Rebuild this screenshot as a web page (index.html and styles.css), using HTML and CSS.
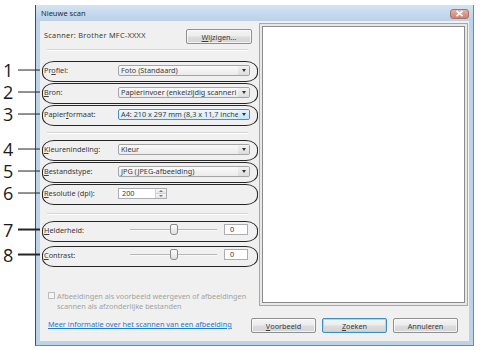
FILE: index.html
```html
<!DOCTYPE html>
<html lang="nl">
<head>
    <meta charset="UTF-8">
    <title>Nieuwe scan</title>
    <link rel="stylesheet" href="styles.css">
</head>
<body>
    <div class="page">
        <div class="window">
            <div class="titlebar">
                <span class="title">Nieuwe scan</span>
                <span class="close">
                    <svg width="9" height="7" viewBox="0 0 9 7"><path d="M1.5 0.8 L7.5 6.2 M7.5 0.8 L1.5 6.2" stroke="#fff" stroke-width="1.6"/></svg>
                </span>
            </div>
            <div class="client">
                <div class="main">
                    <div class="settings">
                        <div class="scanner-row">
                            <span class="scanner-name">Scanner: Brother MFC-XXXX</span>
                            <span class="btn btn-change"><u>W</u>ijzigen...</span>
                        </div>
                        <div class="sep sep-1"></div>

                        <div class="group group-a">
                            <div class="row">
                                <span class="callout">1</span>
                                <span class="label">Pr<u>o</u>fiel:</span>
                                <span class="combo"><span class="combo-text">Foto (Standaard)</span><span class="arrow"></span></span>
                            </div>
                            <div class="row">
                                <span class="callout">2</span>
                                <span class="label"><u>B</u>ron:</span>
                                <span class="combo"><span class="combo-text">Papierinvoer (enkelzijdig scanneri</span><span class="arrow"></span></span>
                            </div>
                            <div class="row">
                                <span class="callout">3</span>
                                <span class="label">Papier<u>f</u>ormaat:</span>
                                <span class="combo combo-focus"><span class="combo-text">A4: 210 x 297 mm (8,3 x 11,7 inche</span><span class="arrow"></span></span>
                            </div>
                        </div>
                        <div class="sep sep-2"></div>

                        <div class="group group-b">
                            <div class="row">
                                <span class="callout">4</span>
                                <span class="label"><u>K</u>leurenindeling:</span>
                                <span class="combo"><span class="combo-text">Kleur</span><span class="arrow"></span></span>
                            </div>
                            <div class="row">
                                <span class="callout">5</span>
                                <span class="label"><u>B</u>estandstype:</span>
                                <span class="combo"><span class="combo-text">JPG (JPEG-afbeelding)</span><span class="arrow"></span></span>
                            </div>
                            <div class="row">
                                <span class="callout">6</span>
                                <span class="label"><u>R</u>esolutie (dpi):</span>
                                <span class="spin">
                                    <span class="spin-value">200</span>
                                    <span class="spin-btns"><span class="up"></span><span class="down"></span></span>
                                </span>
                            </div>
                        </div>
                        <div class="sep sep-3"></div>

                        <div class="group group-c">
                            <div class="row row-slider">
                                <span class="callout">7</span>
                                <span class="label"><u>H</u>elderheid:</span>
                                <span class="slider"><span class="track"></span><span class="thumb"></span></span>
                                <span class="value">0</span>
                            </div>
                            <div class="row row-slider">
                                <span class="callout">8</span>
                                <span class="label"><u>C</u>ontrast:</span>
                                <span class="slider"><span class="track"></span><span class="thumb"></span></span>
                                <span class="value">0</span>
                            </div>
                        </div>

                        <div class="check">
                            <span class="checkbox"></span>
                            <span>Afbeeldingen als voorbeeld weergeven of afbeeldingen<br>scannen als afzonderlijke bestanden</span>
                        </div>
                    </div>
                    <div class="preview"><div class="preview-inner"></div></div>
                </div>
                <div class="footer">
                    <a class="link" href="#">Meer informatie over het scannen van een afbeelding</a>
                    <div class="buttons">
                        <span class="btn"><u>V</u>oorbeeld</span>
                        <span class="btn btn-default"><u>Z</u>oeken</span>
                        <span class="btn">Annuleren</span>
                    </div>
                </div>
            </div>
        </div>
    </div>
</body>
</html>
```
FILE: styles.css
```css
*{
    margin: 0;
    padding: 0;
    box-sizing: border-box;
}
body {
    width: 500px;
    height: 350px;
    background-color: white;
    font-family: 'Noto Sans', 'Open Sans', sans-serif;
    font-size: 7.3px;
    color: #3a3a3a;
    overflow: hidden;
}
u {
    text-decoration: underline;
    text-underline-offset: 1px;
}
.page {
    padding: 5px 0 0 35px;
}
.window {
    width: 439px;
    height: 341px;
    display: flex;
    flex-direction: column;
    background: #bcd3ea;
    border-left: 1px solid #4a4a4a;
    border-right: 1px solid #2aa0dc;
    border-bottom: 1px solid #2aa0dc;
}
.titlebar {
    height: 16px;
    display: flex;
    align-items: center;
    padding: 0 4px 0 5px;
    background: linear-gradient(#d3e3f3, #bad1e9);
}
.title {
    font-size: 7.5px;
    color: #2a2a2a;
}
.close {
    margin-left: auto;
    width: 19px;
    height: 10px;
    margin-top: 1px;
    display: flex;
    align-items: center;
    justify-content: center;
    border: 1px solid #a87468;
    border-radius: 3px;
    background: linear-gradient(#e2b2a6, #c98473);
}
.close svg {
    display: block;
}
.client {
    flex: 1;
    margin: 0 4px 4px 4px;
    padding: 2px 1px 0 4px;
    background-color: #f0f0f0;
    display: flex;
    flex-direction: column;
}
.main {
    height: 283px;
    display: flex;
}
.settings {
    width: 215px;
    padding: 6px 9px 0 0;
    display: flex;
    flex-direction: column;
}
.scanner-row {
    height: 17px;
    display: flex;
    align-items: center;
    justify-content: space-between;
}
.scanner-name {
    margin-top: -3px;
    letter-spacing: 0.3px;
}
.btn {
    display: flex;
    align-items: center;
    justify-content: center;
    width: 65px;
    height: 15px;
    border: 1px solid #8e8f8f;
    border-radius: 2px;
    background: linear-gradient(#f4f4f4 0%, #ececec 48%, #dddddd 52%, #d4d4d4 100%);
    box-shadow: inset 0 0 0 1px rgba(255, 255, 255, 0.7);
    color: #3a3a3a;
}
.btn-change {
    width: 66px;
    margin-right: -2px;
}
.btn-default {
    border-color: #3c8fc5;
    box-shadow: inset 0 0 0 1px #9fdbf7;
}
.sep {
    height: 2px;
    margin: 0 2px 0 3px;
    border-top: 1px solid #d5d5d5;
    border-bottom: 1px solid #ffffff;
}
.sep-1 {
    margin-top: 5px;
}
.group-a {
    margin-top: 8px;
}
.sep-2 {
    margin-top: 7px;
}
.group-b {
    margin-top: 4px;
}
.sep-3 {
    margin-top: 9px;
}
.group-c {
    margin-top: 2px;
}
.row {
    position: relative;
    height: 22px;
    display: flex;
    align-items: center;
}
.row-slider {
    height: 25px;
}
.row::before {
    content: '';
    position: absolute;
    left: -2px;
    right: -8px;
    top: 50%;
    height: 19px;
    margin-top: -9px;
    border: 1.4px solid #262626;
    border-radius: 12px / 9px;
}
.callout {
    position: absolute;
    left: -41px;
    top: 50%;
    transform: translateY(-52%);
    display: flex;
    align-items: center;
    font-family: 'Open Sans', sans-serif;
    font-size: 18px;
    color: #1a1a1a;
}
.callout::after {
    content: '';
    width: 22px;
    height: 1.4px;
    margin-left: 5px;
    margin-top: 1px;
    background: #262626;
}
.label {
    width: 74px;
    flex: none;
}
.combo {
    position: relative;
    width: 132px;
    height: 11px;
    display: flex;
    align-items: center;
    border: 1px solid #a4a4a4;
    border-radius: 2px;
    background: linear-gradient(#fafafa, #ebebeb);
    overflow: hidden;
}
.combo-text {
    flex: 1;
    padding-left: 2px;
    white-space: nowrap;
    overflow: hidden;
    line-height: 9px;
}
.combo-focus {
    border-color: #4a8fc8;
    background: linear-gradient(#eef7fd, #d6edfb);
}
.arrow {
    width: 11px;
    height: 100%;
    display: flex;
    align-items: center;
    justify-content: center;
    background: linear-gradient(#f2f2f2, #dcdcdc);
}
.combo-focus .arrow {
    background: linear-gradient(#e3f3fd, #c3e4f8);
}
.arrow::after {
    content: '';
    border-left: 2.5px solid transparent;
    border-right: 2.5px solid transparent;
    border-top: 3px solid #333;
}
.spin {
    width: 49px;
    height: 11px;
    display: flex;
    border: 1px solid #abadb3;
    background: white;
}
.spin-value {
    flex: 1;
    padding-left: 3px;
    line-height: 9px;
}
.spin-btns {
    width: 11px;
    display: flex;
    flex-direction: column;
    border-left: 1px solid #d0d0d0;
}
.spin-btns span {
    flex: 1;
    display: flex;
    align-items: center;
    justify-content: center;
    background: linear-gradient(#f6f6f6, #e6e6e6);
}
.spin-btns .up {
    border-bottom: 1px solid #d0d0d0;
}
.spin-btns .up::after {
    content: '';
    border-left: 2px solid transparent;
    border-right: 2px solid transparent;
    border-bottom: 2px solid #777;
}
.spin-btns .down::after {
    content: '';
    border-left: 2px solid transparent;
    border-right: 2px solid transparent;
    border-top: 2px solid #777;
}
.slider {
    position: relative;
    width: 87px;
    height: 12px;
    margin-left: 12px;
    display: flex;
    align-items: center;
}
.track {
    width: 100%;
    height: 2px;
    border-top: 1px solid #b8b8b8;
    border-bottom: 1px solid #f8f8f8;
}
.thumb {
    position: absolute;
    left: 40px;
    top: 0;
    width: 8px;
    height: 11px;
    border: 1px solid #8a8a8a;
    border-radius: 2px 2px 3px 3px;
    background: linear-gradient(#fbfbfb, #e0e0e0);
}
.value {
    width: 24px;
    height: 11px;
    margin-left: 7px;
    padding-left: 5px;
    line-height: 9px;
    border: 1px solid #abadb3;
    background: white;
}
.check {
    margin-top: 24px;
    padding-left: 4px;
    display: flex;
    align-items: flex-start;
    gap: 2px;
    color: #a3a3a3;
    line-height: 10px;
}
.checkbox {
    width: 7px;
    height: 7px;
    margin-top: 1px;
    border: 1px solid #bdbdbd;
    background: #f4f4f4;
}
.preview {
    width: 209px;
    height: 283px;
    padding: 2px;
    border: 1px solid #a8a8a8;
    background: #e8e8e8;
}
.preview-inner {
    width: 100%;
    height: 100%;
    border: 1px solid #8c8c8c;
    background: white;
}
.footer {
    margin-top: 12px;
    display: flex;
    align-items: flex-start;
}
.link {
    margin: 1px 0 0 4px;
    color: #1b7ad2;
    text-decoration: underline;
}
.buttons {
    margin-left: auto;
    margin-right: 10px;
    display: flex;
    gap: 6px;
}
```
